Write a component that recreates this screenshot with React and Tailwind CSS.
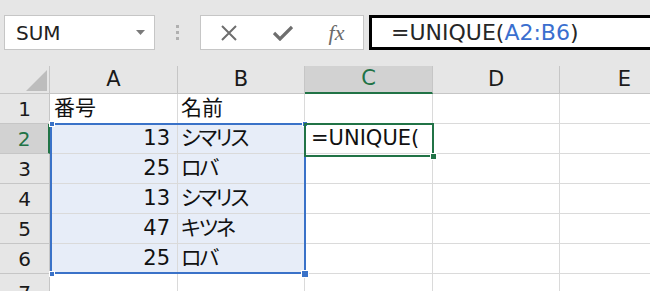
import React from 'react';

const cols = ['A', 'B', 'C', 'D', 'E'];

const rows = [
  { n: 1, a: '番号', b: '名前' },
  { n: 2, a: '13', b: 'シマリス', c: '=UNIQUE(' },
  { n: 3, a: '25', b: 'ロバ' },
  { n: 4, a: '13', b: 'シマリス' },
  { n: 5, a: '47', b: 'キツネ' },
  { n: 6, a: '25', b: 'ロバ' },
  { n: 7 },
];

function Toolbar() {
  return (
    <div className="h-[66px] bg-[#e6e6e6] flex items-start pt-[15px]">
      {/* name box */}
      <div className="ml-[4px] w-[151px] h-[35px] bg-white border border-[#c6c6c6] flex items-center pl-[11px] pr-[9px]">
        <span className="text-[20px] text-[#222] flex-1 leading-none">SUM</span>
        <svg width="9" height="5" viewBox="0 0 9 5">
          <path d="M0 0 L9 0 L4.5 5 Z" fill="#7a7a7a" />
        </svg>
      </div>

      {/* grip dots */}
      <div className="w-[45px] h-[35px] flex flex-col items-center justify-center gap-[3px]">
        <span className="w-[3px] h-[3px] bg-[#b0b0b0]" />
        <span className="w-[3px] h-[3px] bg-[#b0b0b0]" />
        <span className="w-[3px] h-[3px] bg-[#b0b0b0]" />
      </div>

      {/* cancel / enter / fx */}
      <div className="w-[164px] h-[35px] bg-white border border-[#c6c6c6] flex items-center">
        <div className="w-[55px] flex justify-center">
          <svg width="16" height="16" viewBox="0 0 16 16">
            <path d="M1 1 L15 15 M15 1 L1 15" stroke="#6e6e6e" strokeWidth="2" />
          </svg>
        </div>
        <div className="w-[54px] flex justify-center">
          <svg width="20" height="16" viewBox="0 0 20 16">
            <path d="M1 8 L7 14 L19 2" stroke="#6e6e6e" strokeWidth="3.2" fill="none" />
          </svg>
        </div>
        <div className="w-[53px] flex justify-center">
          <span className="font-['Liberation_Serif',serif] italic text-[22px] text-[#6a6a6a] leading-none">fx</span>
        </div>
      </div>

      {/* formula input */}
      <div className="ml-[5px] flex-1 h-[35px] bg-white border-[3px] border-r-0 border-black flex items-center pl-[19px]">
        <span className="text-[22px] leading-none text-[#262626] whitespace-nowrap">
          =UNIQUE(<span className="text-[#3a6fcf]">A2:B6</span>)
        </span>
      </div>
    </div>
  );
}

function Sheet() {
  return (
    <div className="relative">
      <div className="grid grid-cols-[50px_128px_127px_128px_127px_130px] grid-rows-[28px_repeat(7,30px)]">
        {/* corner */}
        <div className="bg-[#e6e6e6] border-r border-b border-[#c6c6c6] flex items-end justify-end pr-[2px] pb-[2px]">
          <svg width="21" height="21" viewBox="0 0 21 21">
            <path d="M21 0 L21 21 L0 21 Z" fill="#bdbdbd" />
          </svg>
        </div>
        {cols.map((c) =>
          c === 'C' ? (
            <div
              key={c}
              className="bg-[#d2d2d2] border-r border-[#c6c6c6] border-b-2 border-b-[#217346] flex items-center justify-center text-[21px] text-[#217346]"
            >
              {c}
            </div>
          ) : (
            <div
              key={c}
              className="bg-[#e6e6e6] border-r border-b border-[#c6c6c6] flex items-center justify-center text-[21px] text-[#1a1a1a]"
            >
              {c}
            </div>
          )
        )}

        {rows.map((r) => {
          const inSel = r.n >= 2 && r.n <= 6;
          return (
            <React.Fragment key={r.n}>
              {r.n === 2 ? (
                <div className="bg-[#d2d2d2] border-b border-[#c6c6c6] border-r-2 border-r-[#217346] flex items-center justify-center text-[20px] text-[#217346]">
                  {r.n}
                </div>
              ) : (
                <div
                  className={
                    'bg-[#e6e6e6] border-r border-b border-[#c6c6c6] flex justify-center text-[20px] text-[#1a1a1a] ' +
                    (r.n === 7 ? 'items-start pt-[4px]' : 'items-center')
                  }
                >
                  {r.n}
                </div>
              )}
              <div
                className={
                  'border-r border-b border-[#dadada] flex items-center text-[21px] text-[#111] whitespace-nowrap ' +
                  (inSel ? 'bg-[#e7edf8] justify-end pr-[7px]' : 'bg-white pl-[4px]')
                }
              >
                {r.a}
              </div>
              <div
                className={
                  "border-r border-b border-[#dadada] flex items-center pl-[3px] text-[21px] text-[#111] whitespace-nowrap [font-feature-settings:'palt'] " +
                  (inSel ? 'bg-[#e7edf8] tracking-[-2px]' : 'bg-white')
                }
              >
                {r.b}
              </div>
              <div className="bg-white border-r border-b border-[#dadada] flex items-center pl-[6px] text-[21px] text-[#111] whitespace-nowrap">
                {r.c}
              </div>
              <div className="bg-white border-r border-b border-[#dadada]" />
              <div className="bg-white border-r border-b border-[#dadada]" />
            </React.Fragment>
          );
        })}
      </div>

      {/* range selection A2:B6 */}
      <div className="absolute left-[50px] top-[57px] w-[256px] h-[151px] border-2 border-[#3a72c8] pointer-events-none" />
      <span className="absolute left-[49px] top-[55px] w-[6px] h-[6px] bg-[#3a72c8] border border-white" />
      <span className="absolute left-[302px] top-[55px] w-[6px] h-[6px] bg-[#3a72c8] border border-white" />
      <span className="absolute left-[49px] top-[205px] w-[6px] h-[6px] bg-[#3a72c8] border border-white" />
      <span className="absolute left-[301px] top-[204px] w-[8px] h-[8px] bg-[#3a72c8] border border-white" />

      {/* active cell C2 */}
      <div className="absolute left-[304px] top-[57px] w-[130px] h-[34px] border-2 border-[#217346] pointer-events-none" />
      <span className="absolute left-[430px] top-[87px] w-[7px] h-[7px] bg-[#217346] border border-white" />
    </div>
  );
}

export default function App() {
  return (
    <div className="w-[650px] h-[291px] overflow-hidden bg-white font-['DejaVu_Sans','Noto_Sans_CJK_JP',sans-serif]">
      <Toolbar />
      <Sheet />
    </div>
  );
}
